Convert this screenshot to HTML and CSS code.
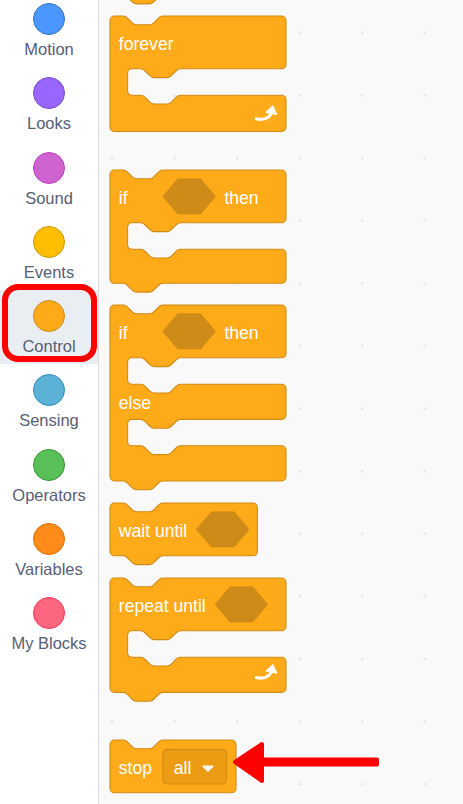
FILE: index.html
```html
<!DOCTYPE html>
<html lang="en">
<head>
<meta charset="utf-8">
<title>Control blocks</title>
<link rel="stylesheet" href="styles.css">
</head>
<body>
<div class="app">
  <nav class="cats">
    <div class="cat-list">
      <div class="cat"><span class="dot c-motion"></span><span class="label">Motion</span></div>
      <div class="cat"><span class="dot c-looks"></span><span class="label">Looks</span></div>
      <div class="cat"><span class="dot c-sound"></span><span class="label">Sound</span></div>
      <div class="cat"><span class="dot c-events"></span><span class="label">Events</span></div>
      <div class="cat selected"><span class="dot c-control"></span><span class="label">Control</span></div>
      <div class="cat"><span class="dot c-sensing"></span><span class="label">Sensing</span></div>
      <div class="cat"><span class="dot c-operators"></span><span class="label">Operators</span></div>
      <div class="cat"><span class="dot c-variables"></span><span class="label">Variables</span></div>
      <div class="cat"><span class="dot c-myblocks"></span><span class="label">My Blocks</span></div>
    </div>
    <div class="highlight"></div>
  </nav>

  <main class="ws">
    <svg class="stub" width="66" height="5" viewBox="0 0 60 4.545">
      <path class="blk" d="M 0,-10 H 60 V -4.5 H 48 c -2,0 -3,1 -4,2 l -4,4 c -1,1 -2,2 -4,2 h -12 c -2,0 -3,-1 -4,-2 l -4,-4 c -1,-1 -2,-2 -4,-2 H 0 Z"/>
    </svg>

    <!-- forever -->
    <svg class="block first" width="176" height="115.5" viewBox="0 0 160 105">
      <path class="blk" d="M 0,4 A 4,4 0 0 1 4,0 H 12 c 2,0 3,1 4,2 l 4,4 c 1,1 2,2 4,2 h 12 c 2,0 3,-1 4,-2 l 4,-4 c 1,-1 2,-2 4,-2 H 156 A 4,4 0 0 1 160,4 V 44 A 4,4 0 0 1 156,48 H 64 c -2,0 -3,1 -4,2 l -4,4 c -1,1 -2,2 -4,2 h -12 c -2,0 -3,-1 -4,-2 l -4,-4 c -1,-1 -2,-2 -4,-2 H 20 A 4,4 0 0 0 16,52 V 68 A 4,4 0 0 0 20,72 H 28 c 2,0 3,1 4,2 l 4,4 c 1,1 2,2 4,2 h 12 c 2,0 3,-1 4,-2 l 4,-4 c 1,-1 2,-2 4,-2 H 156 A 4,4 0 0 1 160,76 V 101 A 4,4 0 0 1 156,105 H 4 A 4,4 0 0 1 0,101 Z"/>
      <text class="bt" x="8" y="30.5">forever</text>
      <path class="rep-line" d="M133,93.5 C139,95 145.5,93 147,87"/>
      <path class="rep-head" d="M142,87.5 L148,82 L151.5,89.5 Z"/>
    </svg>

    <!-- if then -->
    <svg class="block group" width="176" height="122.1" viewBox="0 0 160 111">
      <path class="blk" d="M 0,4 A 4,4 0 0 1 4,0 H 12 c 2,0 3,1 4,2 l 4,4 c 1,1 2,2 4,2 h 12 c 2,0 3,-1 4,-2 l 4,-4 c 1,-1 2,-2 4,-2 H 156 A 4,4 0 0 1 160,4 V 44 A 4,4 0 0 1 156,48 H 64 c -2,0 -3,1 -4,2 l -4,4 c -1,1 -2,2 -4,2 h -12 c -2,0 -3,-1 -4,-2 l -4,-4 c -1,-1 -2,-2 -4,-2 H 20 A 4,4 0 0 0 16,52 V 68 A 4,4 0 0 0 20,72 H 28 c 2,0 3,1 4,2 l 4,4 c 1,1 2,2 4,2 h 12 c 2,0 3,-1 4,-2 l 4,-4 c 1,-1 2,-2 4,-2 H 156 A 4,4 0 0 1 160,76 V 99 A 4,4 0 0 1 156,103 H 48 c -2,0 -3,1 -4,2 l -4,4 c -1,1 -2,2 -4,2 h -12 c -2,0 -3,-1 -4,-2 l -4,-4 c -1,-1 -2,-2 -4,-2 H 4 A 4,4 0 0 1 0,99 Z"/>
      <text class="bt" x="8" y="30.5">if</text>
      <path class="hex" d="M 61.5,8 H 82.5 L 96,24 L 82.5,40 H 61.5 L 48,24 Z"/>
      <text class="bt" x="104" y="30.5">then</text>
    </svg>

    <!-- if then else -->
    <svg class="block" width="176" height="184.8" viewBox="0 0 160 168">
      <path class="blk" d="M 0,4 A 4,4 0 0 1 4,0 H 12 c 2,0 3,1 4,2 l 4,4 c 1,1 2,2 4,2 h 12 c 2,0 3,-1 4,-2 l 4,-4 c 1,-1 2,-2 4,-2 H 156 A 4,4 0 0 1 160,4 V 44 A 4,4 0 0 1 156,48 H 64 c -2,0 -3,1 -4,2 l -4,4 c -1,1 -2,2 -4,2 h -12 c -2,0 -3,-1 -4,-2 l -4,-4 c -1,-1 -2,-2 -4,-2 H 20 A 4,4 0 0 0 16,52 V 68 A 4,4 0 0 0 20,72 H 28 c 2,0 3,1 4,2 l 4,4 c 1,1 2,2 4,2 h 12 c 2,0 3,-1 4,-2 l 4,-4 c 1,-1 2,-2 4,-2 H 156 A 4,4 0 0 1 160,76 V 100 A 4,4 0 0 1 156,104 H 64 c -2,0 -3,1 -4,2 l -4,4 c -1,1 -2,2 -4,2 h -12 c -2,0 -3,-1 -4,-2 l -4,-4 c -1,-1 -2,-2 -4,-2 H 20 A 4,4 0 0 0 16,108 V 124 A 4,4 0 0 0 20,128 H 28 c 2,0 3,1 4,2 l 4,4 c 1,1 2,2 4,2 h 12 c 2,0 3,-1 4,-2 l 4,-4 c 1,-1 2,-2 4,-2 H 156 A 4,4 0 0 1 160,132 V 156 A 4,4 0 0 1 156,160 H 48 c -2,0 -3,1 -4,2 l -4,4 c -1,1 -2,2 -4,2 h -12 c -2,0 -3,-1 -4,-2 l -4,-4 c -1,-1 -2,-2 -4,-2 H 4 A 4,4 0 0 1 0,156 Z"/>
      <text class="bt" x="8" y="30.5">if</text>
      <path class="hex" d="M 61.5,8 H 82.5 L 96,24 L 82.5,40 H 61.5 L 48,24 Z"/>
      <text class="bt" x="104" y="30.5">then</text>
      <text class="bt" x="8" y="94.5">else</text>
    </svg>

    <!-- wait until -->
    <svg class="block" width="147.4" height="61.6" viewBox="0 0 134 56">
      <path class="blk" d="M 0,4 A 4,4 0 0 1 4,0 H 12 c 2,0 3,1 4,2 l 4,4 c 1,1 2,2 4,2 h 12 c 2,0 3,-1 4,-2 l 4,-4 c 1,-1 2,-2 4,-2 H 130 A 4,4 0 0 1 134,4 V 44 A 4,4 0 0 1 130,48 H 48 c -2,0 -3,1 -4,2 l -4,4 c -1,1 -2,2 -4,2 h -12 c -2,0 -3,-1 -4,-2 l -4,-4 c -1,-1 -2,-2 -4,-2 H 4 A 4,4 0 0 1 0,44 Z"/>
      <text class="bt" x="8" y="30.5">wait until</text>
      <path class="hex" d="M 92,8 H 113 L 126.5,24 L 113,40 H 92 L 78.5,24 Z"/>
    </svg>

    <!-- repeat until -->
    <svg class="block" width="176" height="123.2" viewBox="0 0 160 112">
      <path class="blk" d="M 0,4 A 4,4 0 0 1 4,0 H 12 c 2,0 3,1 4,2 l 4,4 c 1,1 2,2 4,2 h 12 c 2,0 3,-1 4,-2 l 4,-4 c 1,-1 2,-2 4,-2 H 156 A 4,4 0 0 1 160,4 V 44 A 4,4 0 0 1 156,48 H 64 c -2,0 -3,1 -4,2 l -4,4 c -1,1 -2,2 -4,2 h -12 c -2,0 -3,-1 -4,-2 l -4,-4 c -1,-1 -2,-2 -4,-2 H 20 A 4,4 0 0 0 16,52 V 68 A 4,4 0 0 0 20,72 H 28 c 2,0 3,1 4,2 l 4,4 c 1,1 2,2 4,2 h 12 c 2,0 3,-1 4,-2 l 4,-4 c 1,-1 2,-2 4,-2 H 156 A 4,4 0 0 1 160,76 V 100 A 4,4 0 0 1 156,104 H 48 c -2,0 -3,1 -4,2 l -4,4 c -1,1 -2,2 -4,2 h -12 c -2,0 -3,-1 -4,-2 l -4,-4 c -1,-1 -2,-2 -4,-2 H 4 A 4,4 0 0 1 0,100 Z"/>
      <text class="bt" x="8" y="30.5">repeat until</text>
      <path class="hex" d="M 109,8 H 130 L 143.5,24 L 130,40 H 109 L 95.5,24 Z"/>
      <path class="rep-line" d="M133,90.5 C139,92 145.5,90 147,84"/>
      <path class="rep-head" d="M142,84.5 L148,79 L151.5,86.5 Z"/>
    </svg>

    <!-- stop -->
    <svg class="block group" width="126" height="52.8" viewBox="0 0 114.5 48">
      <path class="blk" d="M 0,4 A 4,4 0 0 1 4,0 H 12 c 2,0 3,1 4,2 l 4,4 c 1,1 2,2 4,2 h 12 c 2,0 3,-1 4,-2 l 4,-4 c 1,-1 2,-2 4,-2 H 110.5 A 4,4 0 0 1 114.5,4 V 44 A 4,4 0 0 1 110.5,48 H 4 A 4,4 0 0 1 0,44 Z"/>
      <text class="bt" x="8" y="30.5">stop</text>
      <rect class="dd" x="48" y="8.5" width="58" height="31.5" rx="4" ry="4"/>
      <text class="bt" x="58" y="30.5">all</text>
      <path class="dd-arrow" d="M 84.5,23.8 H 93.5 L 89,28.3 Z"/>
    </svg>

    <svg class="pointer" width="152" height="47" viewBox="0 0 152 47">
      <path d="M 5,23 L 32,5 L 32,20.5 L 147,20.5 L 147,25.5 L 32,25.5 L 32,42 Z"/>
    </svg>
  </main>
</div>
</body>
</html>
```

FILE: styles.css
```css
* { box-sizing: border-box; }

html, body {
  margin: 0;
  padding: 0;
  width: 463px;
  height: 804px;
  overflow: hidden;
  font-family: "Liberation Sans", Arial, sans-serif;
}

.app {
  display: flex;
  width: 463px;
  height: 804px;
}

/* ---------- category sidebar ---------- */
.cats {
  position: relative;
  flex: 0 0 99px;
  width: 99px;
  height: 804px;
  background: #ffffff;
  border-right: 1px solid #dcdcdc;
  overflow: hidden;
}

.cat-list {
  display: flex;
  flex-direction: column;
  margin-top: -7px;
}

.cat {
  display: flex;
  flex-direction: column;
  align-items: center;
  height: 74.25px;
  padding-top: 10px;
}

.cat.selected {
  background: #e9eef2;
}

.dot {
  display: block;
  width: 32px;
  height: 32px;
  border-radius: 50%;
  border: 1px solid;
  margin-bottom: 4px;
}

.label {
  display: block;
  font-size: 16.5px;
  line-height: 20px;
  color: #575e75;
  white-space: nowrap;
}

.c-motion    { background: #4c97ff; border-color: #3373cc; }
.c-looks     { background: #9966ff; border-color: #774dcb; }
.c-sound     { background: #cf63cf; border-color: #bd42bd; }
.c-events    { background: #ffbf00; border-color: #cc9900; }
.c-control   { background: #ffab19; border-color: #cf8b17; }
.c-sensing   { background: #5cb1d6; border-color: #2e8eb8; }
.c-operators { background: #59c059; border-color: #389438; }
.c-variables { background: #ff8c1a; border-color: #db6e00; }
.c-myblocks  { background: #ff6680; border-color: #ff3355; }

.highlight {
  position: absolute;
  left: 2px;
  top: 284px;
  width: 95px;
  height: 78px;
  border: 6px solid #ff0000;
  border-radius: 16px;
}

/* ---------- workspace / flyout ---------- */
.ws {
  position: relative;
  flex: 1 1 auto;
  height: 804px;
  background-color: #f9f9f9;
  background-image: radial-gradient(circle, #e6e6e6 0, #e6e6e6 1px, rgba(249,249,249,0) 1.6px);
  background-size: 62.6px 62.6px;
  background-position: -18.3px 1.7px;
  display: flex;
  flex-direction: column;
  align-items: flex-start;
  padding-left: 11px;
  overflow: hidden;
}

.stub {
  display: block;
  flex: 0 0 auto;
}

.block {
  display: block;
  flex: 0 0 auto;
  overflow: visible;
  margin-top: 13.2px;
}

.block.first { margin-top: 11px; }
.block.group { margin-top: 38.6px; }

.blk {
  fill: #ffab19;
  stroke: #cf8b17;
  stroke-width: 1;
}

.bt {
  fill: #ffffff;
  font-family: "Liberation Sans", Arial, sans-serif;
  font-size: 16px;
}

.hex {
  fill: #cf8b17;
  stroke: #cf8b17;
  stroke-width: 0.6;
}

.dd {
  fill: #ec9c13;
  stroke: #cf8b17;
  stroke-width: 1;
}

.dd-arrow {
  fill: #ffffff;
  stroke: #ffffff;
  stroke-width: 1.2;
  stroke-linejoin: round;
}

.rep-line {
  fill: none;
  stroke: #ffffff;
  stroke-width: 2.8;
  stroke-linecap: round;
}

.rep-head {
  fill: #ffffff;
  stroke: #ffffff;
  stroke-width: 1.2;
  stroke-linejoin: round;
}

.pointer {
  position: absolute;
  left: 131px;
  top: 739px;
  overflow: visible;
}

.pointer path {
  fill: #ff0000;
  stroke: #ff0000;
  stroke-width: 4;
  stroke-linejoin: round;
}
```
